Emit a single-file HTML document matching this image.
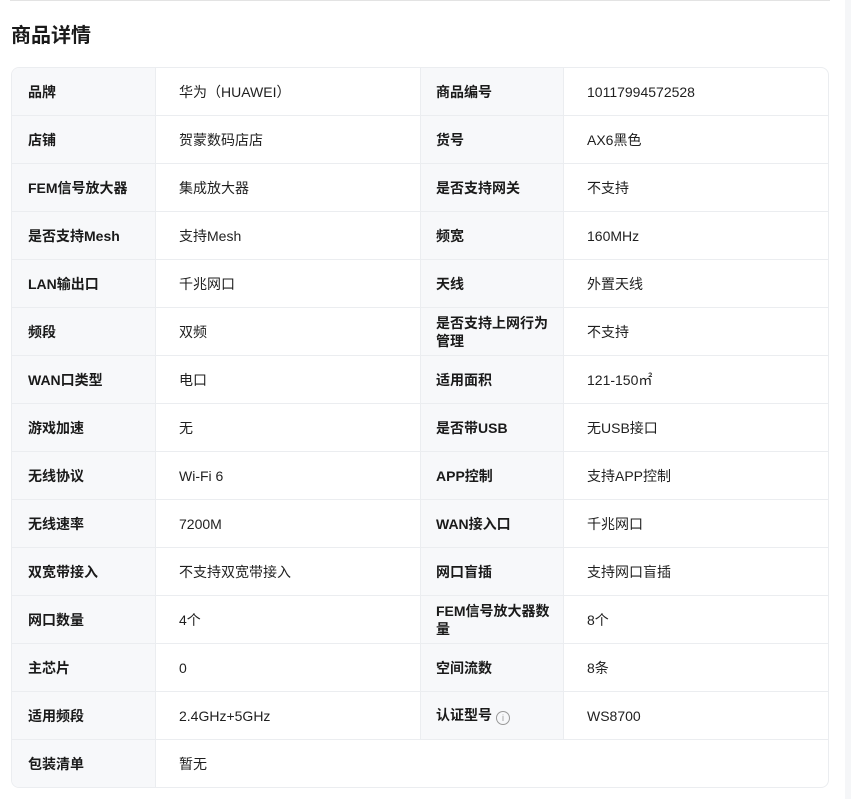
<!DOCTYPE html>
<html><head><meta charset="utf-8"><style>
body{margin:0;width:851px;height:799px;background:#fff;font-family:"Liberation Sans","Noto Sans CJK SC",sans-serif;position:relative;overflow:hidden;color:#1f1f1f}
.top{position:absolute;left:10px;top:0;width:820px;height:1px;background:#e3e3e3}
.sb{position:absolute;right:0;top:0;width:6px;height:799px;background:#f5f6f8}
h1{position:absolute;left:11px;top:21px;margin:0;font-size:20px;font-weight:bold;line-height:30px;color:#1a1a1a}
table{position:absolute;left:11px;top:67px;width:818px;border-collapse:separate;border-spacing:0;border:1px solid #ebedf0;border-radius:8px;overflow:hidden;font-size:14px;table-layout:fixed}
td{height:47px;border-bottom:1px solid #ebedf0;padding:0;vertical-align:middle;line-height:18px}
tr:last-child td{border-bottom:none}
td.l{background:#f7f8fa;font-weight:bold;padding-left:16px;color:#1a1a1a}
td.v{padding-left:23px;border-left:1px solid #ebedf0}
td.l2{border-left:1px solid #ebedf0;padding-left:15px;padding-right:8px}
.i{display:inline-block;width:12px;height:12px;border:1px solid #999;border-radius:50%;font-size:9px;line-height:12px;text-align:center;color:#999;font-weight:normal;vertical-align:-1px;margin-left:4px}
</style></head><body>
<div class="top"></div><div class="sb"></div>
<h1>商品详情</h1>
<table>
<colgroup><col style="width:143px"><col style="width:265px"><col style="width:143px"><col></colgroup>
<tr><td class="l">品牌</td><td class="v">华为（HUAWEI）</td><td class="l l2">商品编号</td><td class="v">10117994572528</td></tr>
<tr><td class="l">店铺</td><td class="v">贺蒙数码店店</td><td class="l l2">货号</td><td class="v">AX6黑色</td></tr>
<tr><td class="l">FEM信号放大器</td><td class="v">集成放大器</td><td class="l l2">是否支持网关</td><td class="v">不支持</td></tr>
<tr><td class="l">是否支持Mesh</td><td class="v">支持Mesh</td><td class="l l2">频宽</td><td class="v">160MHz</td></tr>
<tr><td class="l">LAN输出口</td><td class="v">千兆网口</td><td class="l l2">天线</td><td class="v">外置天线</td></tr>
<tr><td class="l">频段</td><td class="v">双频</td><td class="l l2">是否支持上网行为管理</td><td class="v">不支持</td></tr>
<tr><td class="l">WAN口类型</td><td class="v">电口</td><td class="l l2">适用面积</td><td class="v">121-150㎡</td></tr>
<tr><td class="l">游戏加速</td><td class="v">无</td><td class="l l2">是否带USB</td><td class="v">无USB接口</td></tr>
<tr><td class="l">无线协议</td><td class="v">Wi-Fi 6</td><td class="l l2">APP控制</td><td class="v">支持APP控制</td></tr>
<tr><td class="l">无线速率</td><td class="v">7200M</td><td class="l l2">WAN接入口</td><td class="v">千兆网口</td></tr>
<tr><td class="l">双宽带接入</td><td class="v">不支持双宽带接入</td><td class="l l2">网口盲插</td><td class="v">支持网口盲插</td></tr>
<tr><td class="l">网口数量</td><td class="v">4个</td><td class="l l2">FEM信号放大器数量</td><td class="v">8个</td></tr>
<tr><td class="l">主芯片</td><td class="v">0</td><td class="l l2">空间流数</td><td class="v">8条</td></tr>
<tr><td class="l">适用频段</td><td class="v">2.4GHz+5GHz</td><td class="l l2">认证型号<span class="i">i</span></td><td class="v">WS8700</td></tr>
<tr><td class="l">包装清单</td><td class="v" colspan="3">暂无</td></tr>
</table>
</body></html>
